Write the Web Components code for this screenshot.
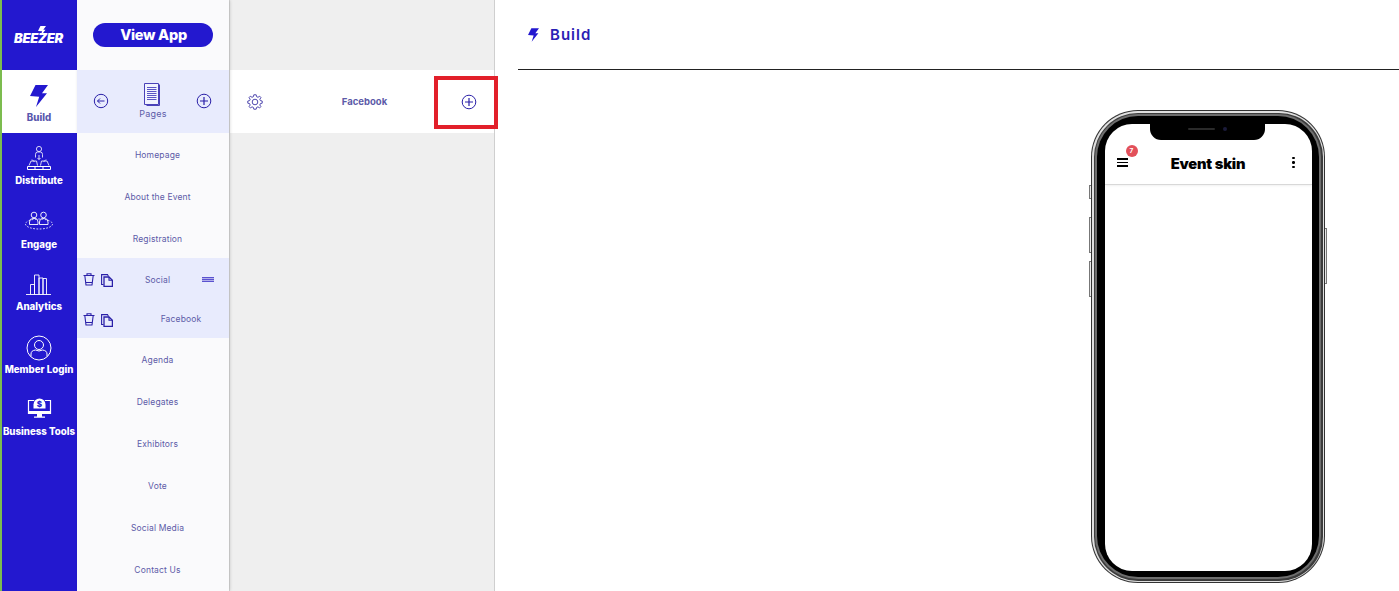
<!DOCTYPE html>
<html lang="en"><head><meta charset="utf-8"><title>Beezer Build</title>
<style>
html,body{margin:0;height:591px;overflow:hidden;background:#fff;font-family:"Inter","Liberation Sans",sans-serif}
</style></head><body>
<beezer-app></beezer-app>
<script>
const BOLT='M5.5 0H18L12 8.2H17L6 22L9.2 11.8L0 11Z';
function def(name,html){
  customElements.define(name,class extends HTMLElement{
    connectedCallback(){
      if(this.shadowRoot)return;
      const r=this.attachShadow({mode:'open'});
      r.innerHTML=typeof html==='function'?html(this):html;
    }
  });
}
const I={
 distribute:`<svg width="30" height="26" viewBox="0 0 30 26" fill="none" stroke="#fff" stroke-width=".8"><circle cx="15" cy="4" r="2.600"/><path d="M11.500 12.500V9.500Q11.500 7 13.500 7H16.500Q18.500 7 18.500 9.500V12.500M15 10V14.500M13.500 13L15 14.500L16.500 13"/><path d="M5 20.500L7 16H12.500L13.500 20.500M25 20.500L23 16H17.500L16.500 20.500M8 14.500L10.500 17M22 14.500L19.500 17"/><path stroke-width="1" d="M3.500 21.500H26.500V24.500H3.500ZM11 21.500V24.500M19 21.500V24.500"/></svg>`,
 engage:`<svg width="30" height="20" viewBox="0 0 30 20" fill="none" stroke="#fff" stroke-width=".9"><circle cx="10" cy="4" r="2.800"/><circle cx="19.500" cy="4" r="2.800"/><path d="M5.500 13.500V11Q5.500 7.500 9 7.500H11Q14 7.500 14 11V13.500ZM15.500 13.500V11Q15.500 7.500 18.500 7.500H20.500Q24 7.500 24 11V13.500Z"/><ellipse cx="15" cy="13" rx="13.500" ry="5" stroke-dasharray="1.600 1.600"/></svg>`,
 analytics:`<svg width="26" height="21" viewBox="0 0 26 21" fill="none" stroke="#fff" stroke-width=".9"><path d="M0 20.500H25M4.500 20.500V10.500H8.500V20.500M8.500 20.500V1H13V20.500M13 20.500V4H17V20.500M17 20.500V4.500H20.500V20.500"/></svg>`,
 member:`<svg width="26" height="26" viewBox="0 0 26 26" fill="none" stroke="#fff" stroke-width="1"><circle cx="13" cy="13" r="12"/><circle cx="13" cy="10" r="4.500"/><path d="M5 21.500V19Q5 15.500 9.500 15Q13 17 16.500 15Q21 15.500 21 19V21.500"/></svg>`,
 tools:`<svg width="25" height="22" viewBox="0 0 25 22"><path fill="none" stroke="#fff" stroke-width="1.200" d="M7 3.500H1.500V16.500H23.500V3.500H18"/><path fill="#fff" d="M1 14H24V16.800H1ZM10 16.800H15V19.500H18V20.800H7V19.500H10Z"/><path fill="#fff" d="M6.500 7.500A6 6 0 1 1 18.500 7.500V11.500H6.500Z"/><text x="12.500" y="9.500" font-family="Inter,sans-serif" font-size="8" font-weight="800" text-anchor="middle" fill="#2318cf">$</text></svg>`,
 back:`<svg width="16" height="16" viewBox="0 0 16 16" fill="none" stroke="#2a20a8" stroke-width="1"><circle cx="8" cy="8" r="6.700"/><path d="M11.500 8H4.500M7 5.500L4.500 8L7 10.500"/></svg>`,
 plus:`<svg width="16" height="16" viewBox="0 0 16 16" fill="none" stroke="#2a20a8" stroke-width="1"><circle cx="8" cy="8" r="6.800"/><path stroke-width="1.200" d="M8 4V12M4 8H12"/></svg>`,
 doc:`<svg width="17" height="23" viewBox="0 0 17 23"><path fill="#fff" fill-opacity=".4" stroke="#4a42b8" stroke-width="1" d="M.5.5H14.500V21.500H.5Z"/><path fill="none" stroke="#4a42b8" stroke-width="1" d="M15.500 1.500V22.500H2.500"/><path stroke="#5a54c4" stroke-width="1" d="M3 4.500H12.500M3 6.500H12.500M3 8.500H12.500M3 10.500H12.500M3 12.500H12.500M3 14.500H12.500M3 16.500H12.500"/></svg>`,
 trash:`<svg width="12" height="13" viewBox="0 0 12 13" fill="none" stroke="#2a20a8" stroke-width="1.100"><path d="M0.500 2.500H11.500M4 2.500V.7H8V2.500M1.800 2.500L3 12H9L10.200 2.500M3 9.500H9"/></svg>`,
 copy:`<svg width="12" height="13" viewBox="0 0 12 13" fill="none" stroke="#2a20a8" stroke-width="1.100"><path d="M2.500 10.500H.6V.6H6.500L7.500 2.500"/><path d="M3 3H8L11.400 6.300V12.400H3Z" stroke-width="1.300"/><path d="M8 3V6.300H11.400"/></svg>`,
 gear:`<svg width="16" height="16" viewBox="0 0 16 16" fill="none" stroke="#3d36a6" stroke-width=".9"><circle cx="8" cy="8" r="2.800"/><path d="M6.800.8H9.200L9.600 2.700L11 3.300L12.700 2.200L14 3.700L12.800 5.200L13.400 6.600L15.200 7V9.200L13.400 9.600L12.800 11L13.900 12.600L12.500 14L11 12.800L9.600 13.400L9.200 15.200H6.800L6.400 13.400L5 12.800L3.500 14L2.100 12.600L3.200 11L2.600 9.600L.8 9.200V7L2.600 6.600L3.200 5.200L2 3.700L3.300 2.200L5 3.300L6.400 2.700Z"/></svg>`
};

def('nav-item',el=>`<style>
:host{display:flex;flex-direction:column;align-items:center;height:${el.getAttribute('h')||63}px;box-sizing:border-box;color:#fff;font:800 9.700px "Inter","Liberation Sans",sans-serif;position:relative;padding-right:1px}
:host([active]){background:#fff;color:#5a58ae}
.i{height:${el.getAttribute('ih')||30}px;margin-top:${el.getAttribute('mt')||12}px;display:flex;align-items:center;justify-content:center}
.l{margin-top:${el.getAttribute('lm')||3}px;white-space:nowrap;line-height:12px}
</style><div class="i"><slot></slot></div><div class="l">${el.getAttribute('label')}</div>`);

def('side-nav',`<style>
:host{display:block;width:75px;height:591px;background:#2318cf;border-left:2px solid #7cbc4f;flex:none}
.logo{height:70px;display:flex;align-items:center;justify-content:center;position:relative;color:#fff;font:italic 900 13px "Inter","Liberation Sans",sans-serif;letter-spacing:-.3px;padding:6px 2px 0 0;box-sizing:border-box}
.logo svg{position:absolute;left:36px;top:26px}
</style>
<div class="logo">BEEZER<svg width="8" height="10" viewBox="0 0 18 22"><path fill="#fff" d="${BOLT}"/></svg></div>
<nav-item label="Build" active mt="13" lm="3" ih="26"><svg width="18" height="22" viewBox="0 0 18 22"><path fill="#2318cf" d="${BOLT}"/></svg></nav-item>
<nav-item label="Distribute" mt="11" lm="3" ih="28">${I.distribute}</nav-item>
<nav-item label="Engage" mt="15" lm="8" ih="20" h="62">${I.engage}</nav-item>
<nav-item label="Analytics" mt="15" lm="6" ih="22" h="63">${I.analytics}</nav-item>
<nav-item label="Member Login" mt="13" lm="2" ih="28" h="62">${I.member}</nav-item>
<nav-item label="Business Tools" mt="13" lm="6" ih="24" h="62">${I.tools}</nav-item>`);

def('page-row',el=>`<style>
:host{display:flex;align-items:center;justify-content:center;height:${el.getAttribute('h')||42}px;font-size:8.500px;color:#5d5ba8;letter-spacing:.15px;position:relative;padding-left:9px;box-sizing:border-box}
</style><slot></slot>`);

def('sub-row',el=>`<style>
:host{display:flex;align-items:center;height:${el.getAttribute('h')}px;position:relative;font-size:8.500px;color:#5d5ba8;letter-spacing:.15px}
.a{display:flex;gap:6px;align-items:center;margin-left:6px;width:30px;flex:none}
.t{flex:1;text-align:center;padding-left:${el.getAttribute('pad')||0}px}
.d{width:12px;margin-right:15px;flex:none;display:flex;flex-direction:column;gap:1px;background:#b3afea}
.d i{display:block;height:1px;background:#5a52d0}
.a svg:last-child{position:relative;top:1px}
</style><div class="a">${I.trash}${I.copy}</div><div class="t"><slot></slot></div>${el.hasAttribute('drag')?'<div class="d"><i></i><i></i><i></i></div>':'<div style="width:12px;margin-right:15px"></div>'}`);

def('pages-panel',`<style>
:host{display:block;width:152px;height:591px;background:#fafafc;flex:none;box-shadow:1px 0 3px rgba(0,0,0,.16);position:relative;z-index:2;font-family:"Inter","Liberation Sans",sans-serif}
.top{height:70px;display:flex;align-items:center;justify-content:center;padding-bottom:2px;box-sizing:border-box}
.btn{width:120px;height:24px;background:#2318cf;color:#fff;border-radius:12px;font:800 14.500px/23px "Inter","Liberation Sans",sans-serif;text-align:center;letter-spacing:-.3px;margin-left:-1px;margin-top:1px;padding-left:2px;box-sizing:border-box}
.head{height:63px;background:#e8ebfd;display:flex;align-items:flex-start;box-sizing:border-box;padding:0 17px 0 16px;justify-content:space-between}
.head>svg{margin-top:23px}
.c{display:flex;flex-direction:column;align-items:center;font-size:9px;color:#5d5ba8;padding-top:13px;letter-spacing:.2px;margin-left:1px}
.c span{margin-top:2px}
.group{background:#e8ebfd;height:80px;margin-bottom:1px}
.list{padding-top:1px}
.reg{padding-top:2px}
</style>
<div class="top"><div class="btn">View App</div></div>
<div class="head">${I.back}<div class="c">${I.doc}<span>Pages</span></div>${I.plus}</div>
<div class="list">
<page-row>Homepage</page-row><page-row>About the Event</page-row><page-row h="40" class="reg">Registration</page-row>
<div class="group"><sub-row h="43" drag>Social</sub-row><sub-row h="36" pad="47">Facebook</sub-row></div>
<page-row>Agenda</page-row><page-row>Delegates</page-row><page-row>Exhibitors</page-row><page-row>Vote</page-row><page-row>Social Media</page-row><page-row>Contact Us</page-row>
</div>`);

def('detail-panel',`<style>
:host{display:block;width:266px;height:591px;background:#efefef;flex:none;border-right:1px solid #cfcfcf;border-left:1px solid #d9d9d9;box-sizing:border-box;position:relative;padding-top:70px}
.row{height:63px;background:#fff;display:flex;align-items:center;padding:0 17px;justify-content:space-between;position:relative;font:700 9.500px "Inter","Liberation Sans",sans-serif;color:#5d5ba8}
.t{position:absolute;left:0;width:269px;text-align:center}
.mark{position:absolute;left:204px;top:76px;width:64px;height:53px;box-sizing:border-box;border:4px solid #e21f2a;z-index:5}
</style><div class="row">${I.gear}<span class="t">Facebook</span>${I.plus}</div><div class="mark"></div>`);

def('phone-frame',`<style>
:host{display:block;width:234px;height:473px;position:relative;flex:none}
.b{position:absolute;background:#e8e8e8;border:1px solid #777;width:1px;box-sizing:content-box}
.s1{position:absolute;inset:0;border-radius:47px;background:#333;padding:1px;box-sizing:border-box}
.s2{height:100%;border-radius:46px;background:#e0e0e0;padding:1.500px;box-sizing:border-box}
.s3{height:100%;border-radius:44px;background:#3c3c3c;padding:1.500px;box-sizing:border-box}
.s3b{height:100%;border-radius:43px;background:#6e6e6e;padding:2px;box-sizing:border-box}
.s4{height:100%;border-radius:41px;background:#000;padding:7.500px 7.500px 6.500px;box-sizing:border-box}
.screen{height:100%;background:#fff;border-radius:27px;overflow:hidden;position:relative;box-sizing:border-box}
.notch{position:absolute;left:45px;top:0;width:115px;height:16px;background:#000;border-radius:0 0 11px 11px;display:flex;align-items:center;justify-content:center;gap:8px;padding-bottom:6px;box-sizing:border-box}
.sp{width:27px;height:2px;border-radius:1px;background:#2a2a2a}
.cam{width:4px;height:4px;border-radius:50%;background:#1b1b3a}
.bar{height:61px;border-bottom:1px solid #d8d8d8;box-shadow:0 1px 2px rgba(0,0,0,.06);display:flex;align-items:center;justify-content:space-between;padding:18px 17px 0 12px;box-sizing:border-box;position:relative}
.title{position:absolute;left:0;right:0;top:19px;height:43px;text-align:center;font:900 14.700px/43px "Inter","Roboto",sans-serif;color:#000;letter-spacing:-.2px}
.burger{width:11px;display:flex;flex-direction:column;gap:2px}
.burger i{height:1.500px;background:#000;display:block}
.dots{display:flex;flex-direction:column;gap:2px;z-index:1}
.dots i{width:2.500px;height:2.500px;border-radius:50%;background:#000;display:block}
.badge{position:absolute;left:21px;top:21px;width:12px;height:12px;border-radius:50%;background:#e2505a;color:#fff;font:700 6.500px/12px "Inter",sans-serif;text-align:center}
</style>
<span class="b" style="left:-2px;top:75px;height:12px"></span>
<span class="b" style="left:-2px;top:107px;height:34px"></span>
<span class="b" style="left:-2px;top:151px;height:34px"></span>
<span class="b" style="right:-2px;top:118px;height:54px"></span>
<div class="s1"><div class="s2"><div class="s3"><div class="s3b"><div class="s4"><div class="screen">
<div class="bar"><div class="burger"><i></i><i></i><i></i></div><div class="title">Event skin</div><div class="dots"><i></i><i></i><i></i></div><div class="badge">7</div></div>
<div class="notch"><div class="sp"></div><div class="cam"></div></div>
</div></div></div></div></div></div>`);

def('main-view',`<style>
:host{display:block;flex:1;height:591px;padding-left:23px;box-sizing:border-box;min-width:0;overflow:hidden}
.h{height:70px;border-bottom:1px solid #222;box-sizing:border-box;display:flex;align-items:center;padding:0 0 0 10px;gap:11px;color:#2a20b4;font:600 15px "Inter","Liberation Sans",sans-serif;letter-spacing:1px}
.c{display:flex;padding:40px 0 0 573px}
</style>
<div class="h"><svg width="11" height="14" viewBox="0 0 18 22"><path fill="#2318cf" d="${BOLT}"/></svg><span>Build</span></div>
<div class="c"><phone-frame></phone-frame></div>`);

def('beezer-app',`<style>
:host{display:flex;width:1399px;height:591px;overflow:hidden;position:relative}
</style><side-nav></side-nav><pages-panel></pages-panel><detail-panel></detail-panel><main-view></main-view>`);
</script>
</body></html>
